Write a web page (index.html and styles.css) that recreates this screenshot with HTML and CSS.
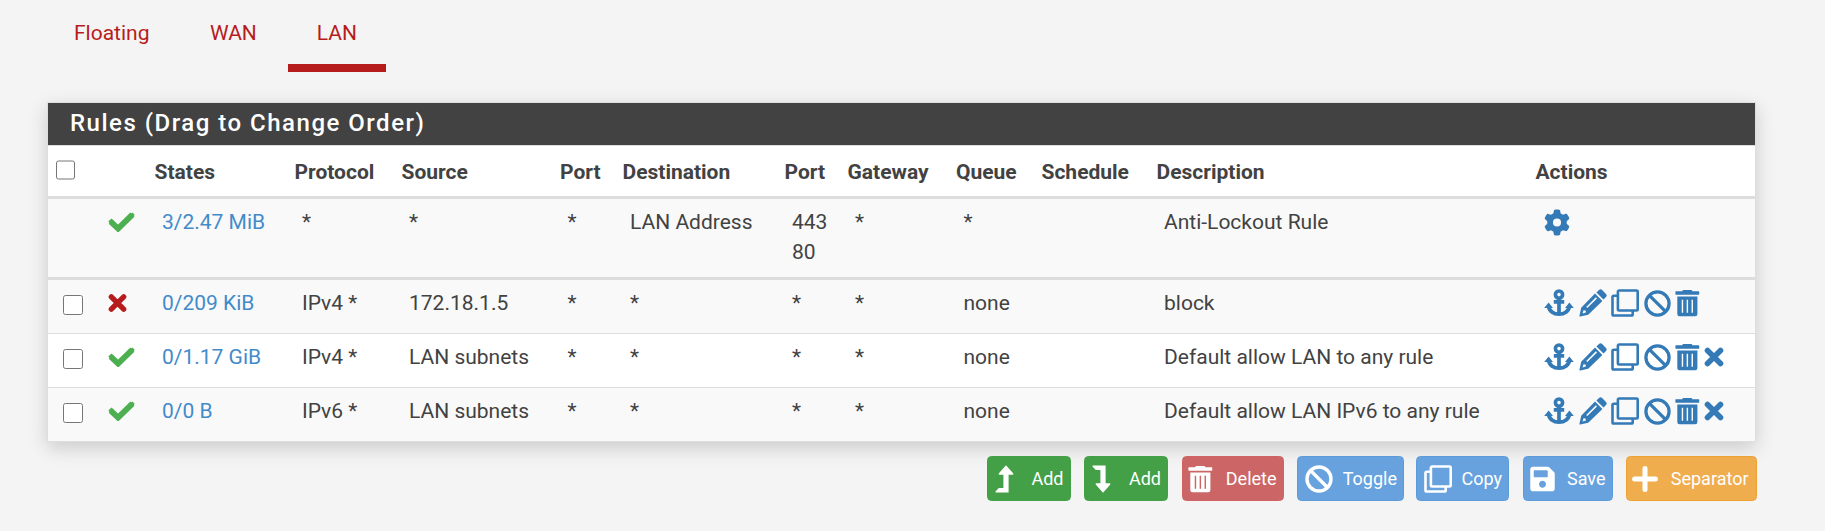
FILE: index.html
```
<!DOCTYPE html>
<html lang="en">
<head>
<meta charset="utf-8">
<title>Firewall rules: LAN</title>
<link rel="stylesheet" href="styles.css">
</head>
<body>
<svg class="sprite" aria-hidden="true">
  <symbol id="check" viewBox="0 0 27 20"><path d="M2.7 9.6 10.1 16.6 24.4 2.6" fill="none" stroke="currentColor" stroke-width="5.8"/><path d="M.3 9.5 3.5 6.5 6 9 3 12.5ZM22 2.700 24.300.4 26.800 2.700 24.500 5.200Z" fill="currentColor"/></symbol>
  <symbol id="times" viewBox="0 0 20 20"><path d="M3.5 3.5 16.5 16.5M16.5 3.5 3.5 16.5" fill="none" stroke="currentColor" stroke-width="5.6" stroke-linecap="round"/></symbol>
  <symbol id="gear" viewBox="0 0 512 512"><path fill="currentColor" d="M495.9 166.6c3.2 8.7 .5 18.4-6.4 24.6l-43.3 39.4c1.1 8.3 1.7 16.8 1.7 25.4s-.6 17.1-1.7 25.4l43.3 39.4c6.9 6.2 9.6 15.9 6.4 24.6c-4.4 11.9-9.7 23.3-15.8 34.3l-4.7 8.1c-6.6 11-14 21.4-22.1 31.2c-5.9 7.2-15.7 9.6-24.5 6.8l-55.7-17.7c-13.4 10.3-28.2 18.9-44 25.4l-12.5 57.1c-2 9.1-9 16.3-18.2 17.8c-13.8 2.3-28 3.5-42.5 3.5s-28.7-1.2-42.5-3.5c-9.2-1.5-16.2-8.7-18.2-17.8l-12.5-57.1c-15.8-6.5-30.6-15.1-44-25.4L83.1 425.9c-8.8 2.8-18.6 .3-24.5-6.8c-8.1-9.8-15.5-20.2-22.1-31.2l-4.7-8.1c-6.1-11-11.4-22.4-15.8-34.3c-3.2-8.7-.5-18.4 6.4-24.6l43.3-39.4C64.6 273.1 64 264.6 64 256s.6-17.1 1.7-25.4L22.4 191.2c-6.9-6.2-9.6-15.9-6.4-24.6c4.4-11.9 9.7-23.3 15.8-34.3l4.7-8.1c6.6-11 14-21.4 22.1-31.2c5.9-7.2 15.7-9.6 24.5-6.8l55.7 17.7c13.4-10.3 28.2-18.9 44-25.4l12.5-57.1c2-9.1 9-16.3 18.2-17.8C227.3 1.2 241.5 0 256 0s28.7 1.2 42.5 3.5c9.2 1.5 16.2 8.7 18.2 17.8l12.5 57.1c15.8 6.5 30.6 15.1 44 25.4l55.7-17.7c8.8-2.8 18.6-.3 24.5 6.8c8.1 9.8 15.5 20.2 22.1 31.2l4.7 8.1c6.1 11 11.4 22.4 15.8 34.3zM256 336a80 80 0 1 0 0-160 80 80 0 1 0 0 160z"/></symbol>
  <symbol id="anchor" viewBox="0 0 30 28"><g fill="none" stroke="currentColor"><circle cx="15" cy="5.6" r="3.6" stroke-width="3.6"/><path d="M15 9v16M9.8 12.9h10.4" stroke-width="3.7"/><path d="M4.5 17C5 22 9.5 25.2 15 25.2S25 22 25.5 17" stroke-width="3.8"/></g><path fill="currentColor" d="M.2 19 4.6 13.6 9 19ZM21 19 25.4 13.6 29.8 19Z"/></symbol>
  <symbol id="pencil" viewBox="0 0 28 28"><path fill="currentColor" fill-rule="evenodd" d="M16 4.6 23.4 12 9.2 25.8 1.3 27.5Q.3 27.6.5 26.6L2.2 18.7ZM16.9 8.3 7.2 18 8.3 19.1 18 9.4ZM4.5 21.2 3.5 24.6 6.9 23.6 6.6 21.5ZM17.4 3.5 20 1Q21.6-.4 23.1 1L27 4.9Q28.4 6.4 27 8L24.5 10.6Z"/></symbol>
  <symbol id="clone" viewBox="0 0 28 28"><g fill="none" stroke="currentColor" stroke-width="2.6"><rect x="6.9" y="1.5" width="19.8" height="20" rx="1.2"/><path d="M7 6.8H2.8Q1.5 6.8 1.5 8V25.2Q1.5 26.5 2.8 26.5H20.4Q21.7 26.5 21.7 25.2V22"/></g></symbol>
  <symbol id="ban" viewBox="0 0 28 28"><g fill="none" stroke="currentColor" stroke-width="3.4"><circle cx="14" cy="14" r="12"/><path d="M5.5 5.5 22.5 22.5"/></g></symbol>
  <symbol id="trash" viewBox="0 0 26 28"><path fill="currentColor" fill-rule="evenodd" d="M1 1.9H7.3L8.4.5H17.2L18.3 1.9H24.6Q25.2 1.9 25.2 2.6V4.7Q25.2 5.3 24.6 5.3H1Q.4 5.3.4 4.7V2.6Q.4 1.9 1 1.9ZM2.4 7.2H23.3V25.4Q23.3 27.7 21 27.7H4.7Q2.4 27.7 2.4 25.4ZM7 10.7V24.2H8.5V10.7ZM12.1 10.7V24.2H13.6V10.7ZM17.2 10.7V24.2H18.7V10.7Z"/></symbol>
  <symbol id="turn-up" viewBox="0 0 19 28"><path fill="currentColor" d="M11 .3 18.3 8.6Q18.6 9.8 17.5 9.8H13.6V27.5H1Q.2 27.4.5 26.6L3.8 23H8.4V9.8H4.5Q3.3 9.7 3.7 8.6Z"/></symbol>
  <symbol id="save" viewBox="0 0 448 512"><path fill="currentColor" d="M433.9 129.9l-83.9-83.9A48 48 0 0 0 316.1 32H48C21.5 32 0 53.5 0 80v352c0 26.5 21.5 48 48 48h352c26.5 0 48-21.5 48-48V163.9a48 48 0 0 0-14.1-34zM224 416c-35.3 0-64-28.7-64-64s28.7-64 64-64 64 28.7 64 64-28.7 64-64 64zm96-304.5V212c0 6.6-5.4 12-12 12H76c-6.6 0-12-5.4-12-12V108c0-6.6 5.4-12 12-12h228.500c3.2 0 6.2 1.3 8.500 3.500l3.500 3.500A12 12 0 0 1 320 111.500z"/></symbol>
  <symbol id="plus" viewBox="0 0 26 26"><path d="M13 2.600V23.400M2.600 13H23.400" fill="none" stroke="currentColor" stroke-width="5" stroke-linecap="round"/></symbol>
</svg>

<nav class="tabs">
  <a class="tab">Floating</a>
  <a class="tab">WAN</a>
  <a class="tab active">LAN</a>
</nav>

<section class="panel">
  <h2 class="panel-title">Rules (Drag to Change Order)</h2>
  <table class="rules">
    <colgroup>
      <col class="c-check"><col class="c-icon"><col class="c-states"><col class="c-proto"><col class="c-source"><col class="c-port"><col class="c-dest"><col class="c-dport"><col class="c-gateway"><col class="c-queue"><col class="c-schedule"><col class="c-desc"><col class="c-actions">
    </colgroup>
    <thead>
      <tr><th><input class="box" type="checkbox"></th><th></th><th>States</th><th>Protocol</th><th>Source</th><th>Port</th><th>Destination</th><th>Port</th><th>Gateway</th><th>Queue</th><th>Schedule</th><th>Description</th><th>Actions</th></tr>
    </thead>
    <tbody>
      <tr class="odd"><td></td><td><svg class="status pass"><use href="#check"/></svg></td><td><a class="link">3/2.47 MiB</a></td><td>*</td><td>*</td><td>*</td><td>LAN Address</td><td>443<br>80</td><td>*</td><td>*</td><td></td><td>Anti-Lockout Rule</td>
        <td><div class="actions"><svg class="i-gear"><use href="#gear"/></svg></div></td></tr>
    </tbody>
    <tbody>
      <tr class="odd"><td><input class="box" type="checkbox"></td><td><svg class="status block"><use href="#times"/></svg></td><td><a class="link">0/209 KiB</a></td><td>IPv4 *</td><td>172.18.1.5</td><td>*</td><td>*</td><td>*</td><td>*</td><td>none</td><td></td><td>block</td>
        <td><div class="actions"><svg class="i-anchor"><use href="#anchor"/></svg><svg class="i-pencil"><use href="#pencil"/></svg><svg class="i-clone"><use href="#clone"/></svg><svg class="i-ban"><use href="#ban"/></svg><svg class="i-trash"><use href="#trash"/></svg></div></td></tr>
      <tr><td><input class="box" type="checkbox"></td><td><svg class="status pass"><use href="#check"/></svg></td><td><a class="link">0/1.17 GiB</a></td><td>IPv4 *</td><td>LAN subnets</td><td>*</td><td>*</td><td>*</td><td>*</td><td>none</td><td></td><td>Default allow LAN to any rule</td>
        <td><div class="actions"><svg class="i-anchor"><use href="#anchor"/></svg><svg class="i-pencil"><use href="#pencil"/></svg><svg class="i-clone"><use href="#clone"/></svg><svg class="i-ban"><use href="#ban"/></svg><svg class="i-trash"><use href="#trash"/></svg><svg class="i-times"><use href="#times"/></svg></div></td></tr>
      <tr class="odd"><td><input class="box" type="checkbox"></td><td><svg class="status pass"><use href="#check"/></svg></td><td><a class="link">0/0 B</a></td><td>IPv6 *</td><td>LAN subnets</td><td>*</td><td>*</td><td>*</td><td>*</td><td>none</td><td></td><td>Default allow LAN IPv6 to any rule</td>
        <td><div class="actions"><svg class="i-anchor"><use href="#anchor"/></svg><svg class="i-pencil"><use href="#pencil"/></svg><svg class="i-clone"><use href="#clone"/></svg><svg class="i-ban"><use href="#ban"/></svg><svg class="i-trash"><use href="#trash"/></svg><svg class="i-times"><use href="#times"/></svg></div></td></tr>
    </tbody>
  </table>
</section>

<div class="toolbar">
  <button class="btn green add-top"><svg class="b-turn"><use href="#turn-up"/></svg><span>Add</span></button>
  <button class="btn green add-end"><svg class="b-turn down"><use href="#turn-up"/></svg><span>Add</span></button>
  <button class="btn red delete"><svg class="b-trash"><use href="#trash"/></svg><span>Delete</span></button>
  <button class="btn blue toggle"><svg class="b-wide"><use href="#ban"/></svg><span>Toggle</span></button>
  <button class="btn blue copy"><svg class="b-wide"><use href="#clone"/></svg><span>Copy</span></button>
  <button class="btn blue save"><svg class="b-save"><use href="#save"/></svg><span>Save</span></button>
  <button class="btn orange separator"><svg class="b-plus"><use href="#plus"/></svg><span>Separator</span></button>
</div>
</body>
</html>
```

FILE: styles.css
```
* { box-sizing: border-box; }
body { margin: 0; height: 531px; overflow: hidden; background: #f4f4f4; color: #424242; font: 21px/30px Roboto, "Liberation Sans", sans-serif; }
svg { display: block; flex: none; }
.sprite { width: 0; height: 0; position: absolute; }

.tabs { display: flex; gap: 3px; height: 72px; padding-left: 45px; }
.tab { padding: 18px 28.5px 0 29px; color: #b71c1c; border-bottom: 8px solid transparent; }
.tab.active { padding-left: 28.5px; border-color: #b71c1c; }

.panel { width: 1709px; margin: 30px 0 0 47px; border: 1px solid #dedede; background: #fff; box-shadow: 0 6px 18px rgba(0, 0, 0, .17); }
.panel-title { margin: 0; height: 43px; padding: 5px 22px 0; background: #424242; border-bottom: 1px solid #ddd; color: #fff; font-size: 24px; font-weight: 500; line-height: 30px; letter-spacing: 1.5px; }

.rules { width: 1707px; table-layout: fixed; border-collapse: separate; border-spacing: 0; }
.rules th { height: 53px; padding: 11px 0 9px 7.5px; border-bottom: 3px solid #ddd; text-align: left; vertical-align: top; font-weight: 700; white-space: nowrap; }
.rules td { height: 54px; padding: 8px 0 14px 15px; border-top: 1.5px solid #ddd; vertical-align: top; white-space: nowrap; }
.rules tbody:nth-of-type(1) td { height: 78px; border-top: 0; padding-bottom: 10px; }
.rules tbody:nth-of-type(2) tr:first-child td { height: 56px; border-top: 3px solid #ddd; }
.odd td { background: #f9f9f9; }
.link { color: #428bca; }

.c-check { width: 45px; }
.c-icon { width: 54px; }
.c-states { width: 140px; }
.c-proto { width: 107px; }
.c-source { width: 158.5px; }
.c-port { width: 62.5px; }
.c-dest { width: 162px; }
.c-dport { width: 63px; }
.c-gateway { width: 108.5px; }
.c-queue { width: 85.5px; }
.c-schedule { width: 115px; }
.c-desc { width: 379px; }
.c-actions { width: 227px; }

.box { display: block; width: 19.5px; height: 19.5px; margin: 7px 0 0; }
th .box { margin: 3px 0 0; }
.status { height: 20px; margin-top: 5px; }
.pass { width: 27px; color: #4caf50; }
.block { width: 19px; color: #b71c1c; }

.actions { display: flex; align-items: center; height: 30px; color: #337ab7; }
.i-gear { width: 26px; height: 27px; margin-left: 1px; }
.i-anchor { width: 30px; height: 28px; margin-left: .5px; }
.i-pencil { width: 28px; height: 28px; margin-left: 5px; }
.i-clone { width: 28px; height: 28px; margin-left: 4px; }
.i-ban { width: 27px; height: 27px; margin-left: 5px; }
.i-trash { width: 25px; height: 28px; margin-left: 4.5px; }
.i-times { width: 20px; height: 20px; margin-left: 3.5px; }

.toolbar { display: flex; justify-content: flex-end; margin: 14px 68.5px 0 0; }
.btn { display: flex; align-items: center; justify-content: space-between; height: 45px; padding: 0 6px 0 7px; border: 1px solid transparent; border-radius: 4.5px; color: #fff; font: 18px/27px Roboto, "Liberation Sans", sans-serif; }
.green { background: #43a047; border-color: #43a047; }
.red { background: #cc6666; border-color: #d06464; }
.blue { background: #67a2de; border-color: #5c9bdb; }
.orange { background: #f0ad4e; border-color: #eea236; }
.add-top { width: 84px; margin-right: 13.5px; }
.add-end { width: 84px; margin-right: 13.5px; }
.delete { width: 102px; margin-right: 13.5px; padding-left: 5px; }
.toggle { width: 107px; margin-right: 12px; }
.copy { width: 93px; margin-right: 13.5px; }
.save { width: 90px; margin-right: 13px; padding-left: 6px; }
.separator { width: 131px; padding-right: 7px; padding-left: 5px; }
.b-turn { width: 19px; height: 28px; }
.down { transform: scaleY(-1); }
.b-trash { width: 25px; height: 28px; }
.b-wide { width: 28px; height: 28px; }
.b-save { width: 25px; height: 28px; }
.b-plus { width: 26px; height: 26px; }
```
